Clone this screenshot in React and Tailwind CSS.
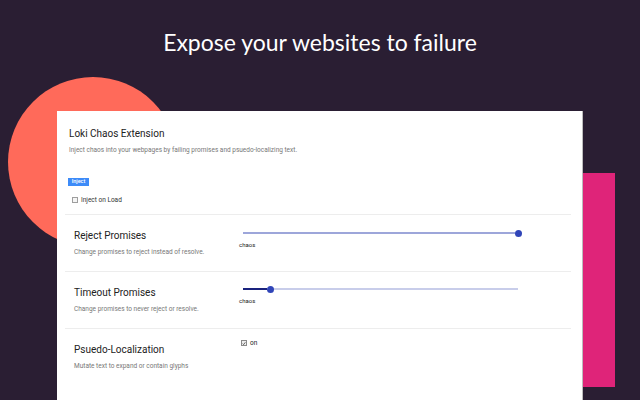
import React from "react";

function Slider({ value }) {
  const total = 275;
  const center = total * value;
  const filled = Math.max(0, Math.round(center - 3.5));
  const rest = Math.max(0, total - filled - 7);
  const full = value >= 1;
  return (
    <div className="ml-[4px] flex h-[8px] w-[282px] items-center">
      <div
        className={full ? "h-[2px] bg-[#9da6da]" : "h-[2px] bg-[#1a237e]"}
        style={{ width: filled }}
      />
      <div className="h-[7px] w-[7px] shrink-0 rounded-full bg-[#3045b8]" />
      {rest > 0 && <div className="h-[2px] bg-[#c8cdea]" style={{ width: rest }} />}
    </div>
  );
}

function Section({ title, desc, children }) {
  return (
    <>
      <div className="flex h-[56px] pl-[17px]">
        <div className="w-[165px] shrink-0">
          <div className="pt-[15px] text-[10px] leading-[12px] text-[#222]">{title}</div>
          <div className="mt-[6px] text-[6.5px] leading-[8px] text-[#777]">{desc}</div>
        </div>
        <div className="flex flex-col">{children}</div>
      </div>
      <div className="ml-[8px] mr-[11px] h-px bg-[#ededed]" />
    </>
  );
}

export default function App() {
  return (
    <div
      className="relative h-[400px] w-[640px] overflow-hidden bg-[#2a1e33]"
      style={{ fontFamily: "Roboto, 'Noto Sans', sans-serif" }}
    >
      <div className="absolute left-[8px] top-[77px] h-[170px] w-[170px] rounded-full bg-[#ff6a5a]" />
      <div className="absolute left-[560px] top-[173px] h-[214px] w-[55px] bg-[#df2479]" />

      <h1
        className="relative pt-[27px] text-center text-[23px] leading-[30px] text-white"
        style={{ fontFamily: "Lato, 'Open Sans', sans-serif" }}
      >
        Expose your websites to failure
      </h1>

      <div className="relative ml-[57px] mt-[54px] h-[289px] w-[526px] border-r border-[#bdbdbd] bg-white">
        <div className="pl-[12px]">
          <div className="pt-[17px] text-[10px] leading-[12px] text-[#222]">Loki Chaos Extension</div>
          <div className="mt-[6px] text-[6.5px] leading-[8px] text-[#777]">
            Inject chaos into your webpages by failing promises and psuedo-localizing text.
          </div>
          <div className="-ml-[1px] mt-[24px] flex h-[8px] w-[21px] items-center justify-center bg-[#3d8bf8] text-[5.5px] font-medium leading-none text-white">
            Inject
          </div>
          <div className="mt-[10px] flex h-[8px] items-center pl-[3px]">
            <span className="h-[6px] w-[6px] border border-[#9e9e9e] bg-[#f5f5f5]" />
            <span className="ml-[3px] text-[6.5px] leading-[8px] text-[#333]">Inject on Load</span>
          </div>
        </div>
        <div className="ml-[8px] mr-[11px] mt-[10px] h-px bg-[#ededed]" />

        <Section title="Reject Promises" desc="Change promises to reject instead of resolve.">
          <div className="pt-[14px]">
            <Slider value={1} />
          </div>
          <div className="mt-[4px] text-[6px] leading-[8px] text-[#222]">chaos</div>
        </Section>

        <Section title="Timeout Promises" desc="Change promises to never reject or resolve.">
          <div className="pt-[13px]">
            <Slider value={0.1} />
          </div>
          <div className="mt-[4px] text-[6px] leading-[8px] text-[#222]">chaos</div>
        </Section>

        <div className="flex h-[56px] pl-[17px]">
          <div className="w-[165px] shrink-0">
            <div className="pt-[15px] text-[10px] leading-[12px] text-[#222]">Psuedo-Localization</div>
            <div className="mt-[6px] text-[6.5px] leading-[8px] text-[#777]">Mutate text to expand or contain glyphs</div>
          </div>
          <div className="pt-[10px]">
            <div className="flex h-[8px] items-center pl-[2px]">
              <span className="flex h-[6px] w-[6px] items-center justify-center border border-[#8a8a8a] bg-[#eee]">
                <svg viewBox="0 0 6 6" className="h-[5px] w-[5px]">
                  <path d="M1 3.2 L2.4 4.6 L5 1.2" fill="none" stroke="#222" strokeWidth="1" />
                </svg>
              </span>
              <span className="ml-[3px] text-[6.5px] leading-[8px] text-[#222]">on</span>
            </div>
          </div>
        </div>
      </div>
    </div>
  );
}
